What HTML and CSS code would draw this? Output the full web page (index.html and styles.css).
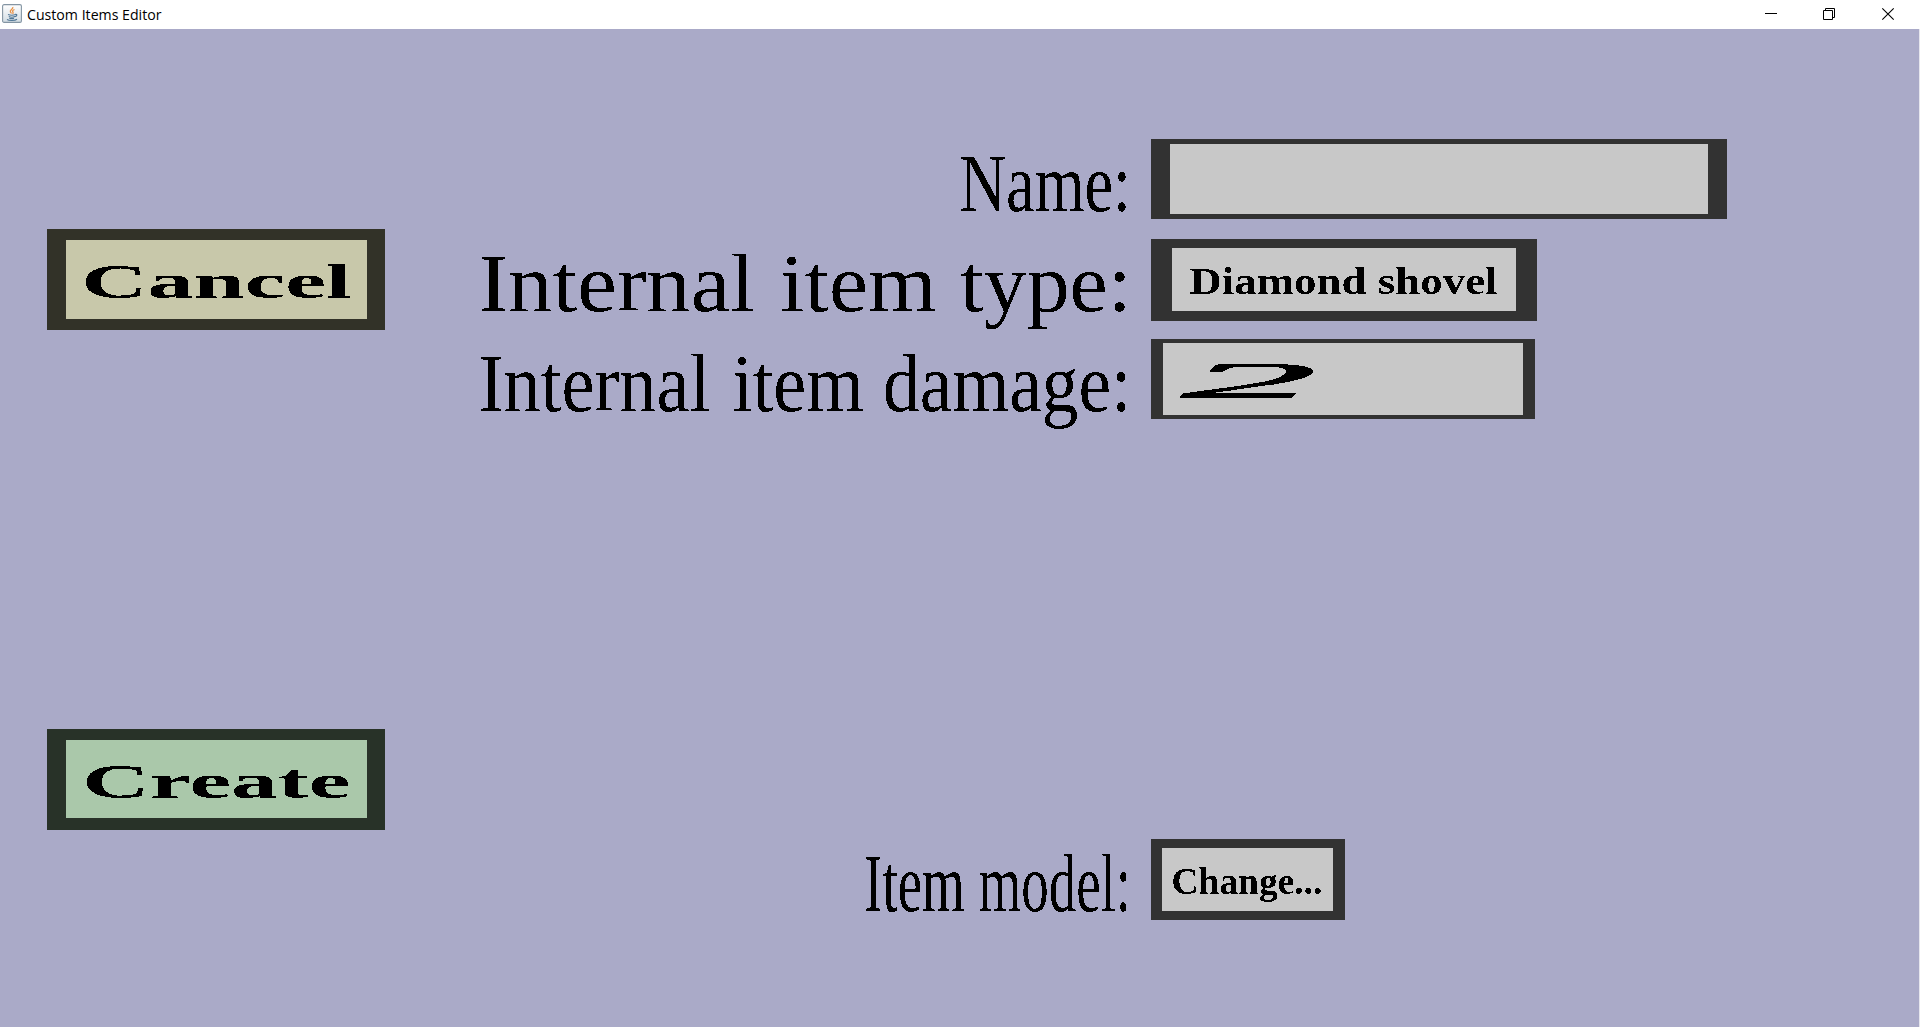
FILE: index.html
```html
<!DOCTYPE html>
<html lang="en">
<head>
<meta charset="utf-8">
<title>Custom Items Editor</title>
<link rel="stylesheet" href="styles.css">
</head>
<body>
<svg class="defs" width="0" height="0" aria-hidden="true">
  <filter id="crisp" x="-5%" y="-20%" width="110%" height="140%" color-interpolation-filters="sRGB">
    <feComponentTransfer><feFuncA type="discrete" tableValues="0 1"/></feComponentTransfer>
  </filter>
</svg>
<header class="titlebar">
  <svg class="app-icon" viewBox="0 0 20 20">
    <defs><linearGradient id="tile" x2="0" y2="1"><stop stop-color="#fff"/><stop offset="1" stop-color="#d3dde4"/></linearGradient></defs>
    <rect x=".6" y=".6" width="18.8" height="17.8" rx="1.5" fill="url(#tile)" stroke="#8495a3" stroke-width="1.1"/>
    <path d="M10.8 3c.8 2-3.6 3-2.4 5 .4.7 1 1 1 1.600M12.500 5.500c-2 .8-2.400 1.500-1.500 2.700.4.700 0 1.200-.5 1.600" fill="none" stroke="#e99145" stroke-width="1.300"/>
    <path d="M6 10.500c2 .8 5.500.8 7.500 0M13.300 10.400c2.400-.4 1.800 1.900-.6 2.200M6.800 12.500c1.500.7 4.500.7 6 0M7.300 14.200c1.300.5 3.500.5 4.700 0M5 15.500c2 1.300 8 1.300 10-.2" fill="none" stroke="#527897" stroke-width="1.100"/>
  </svg>
  <svg class="title" width="160" height="29"><text x="1" y="20" textLength="134.500" lengthAdjust="spacingAndGlyphs">Custom Items Editor</text></svg>
  <div class="controls">
    <svg class="minimize" width="12" height="12"><path d="M0 5.500h12"/></svg>
    <svg width="12" height="12"><path d="M.5 2.500h9v9h-9zM2.500 2.500v-2h9v9h-2"/></svg>
    <svg class="close" width="12" height="12"><path d="M.3.300l11.400 11.400M11.700.300l-11.400 11.400"/></svg>
  </div>
</header>
<main class="editor">
  <nav class="actions">
    <button class="button cancel"><svg><text x="15.300" y="57.700" textLength="270.200" lengthAdjust="spacingAndGlyphs">Cancel</text></svg></button>
    <button class="button create"><svg><text x="16.200" y="57.700" textLength="268" lengthAdjust="spacingAndGlyphs">Create</text></svg></button>
  </nav>
  <section class="form">
    <div class="row">
      <svg class="label"><text x="479.500" y="72" textLength="171.500" lengthAdjust="spacingAndGlyphs">Name:</text></svg>
      <div class="field name"></div>
    </div>
    <div class="row">
      <svg class="label"><text y="72"><tspan x="-1.500" textLength="276.500" lengthAdjust="spacingAndGlyphs">Internal</tspan> <tspan x="300" textLength="156.500" lengthAdjust="spacingAndGlyphs">item</tspan> <tspan x="480" textLength="171.500" lengthAdjust="spacingAndGlyphs">type:</tspan></text></svg>
      <button class="field type"><svg><text x="17.300" y="45.600" textLength="308.300" lengthAdjust="spacingAndGlyphs">Diamond shovel</text></svg></button>
    </div>
    <div class="row">
      <svg class="label"><text y="72"><tspan x="-1.200" textLength="231.500" lengthAdjust="spacingAndGlyphs">Internal</tspan> <tspan x="252.200" textLength="131.600" lengthAdjust="spacingAndGlyphs">item</tspan> <tspan x="403" textLength="248.500" lengthAdjust="spacingAndGlyphs">damage:</tspan></text></svg>
      <div class="field damage"><svg><text x="18.200" y="54.400" textLength="136" lengthAdjust="spacingAndGlyphs">2</text></svg></div>
    </div>
    <div class="row model-row">
      <svg class="label"><text x="384.100" y="72" textLength="267" lengthAdjust="spacingAndGlyphs">Item model:</text></svg>
      <button class="field model"><svg><text x="9.600" y="45.600" textLength="150.700" lengthAdjust="spacingAndGlyphs">Change...</text></svg></button>
    </div>
  </section>
</main>
</body>
</html>
```
FILE: styles.css
```css
* { box-sizing: border-box; }
body {
  margin: 0;
  height: 1027px;
  overflow: hidden;
  display: flex;
  flex-direction: column;
  background: #aaaac8;
  font-family: "Liberation Serif", serif;
}
.defs { position: absolute; }
svg { display: block; flex: none; overflow: visible; }
button { font: inherit; text-align: left; }

.titlebar {
  height: 29px;
  flex: none;
  display: flex;
  align-items: flex-start;
  padding: 0 26px 0 2px;
  background: #fff;
}
.app-icon { width: 20px; height: 20px; margin-top: 4px; }
.title { margin-left: 4px; font: 14.5px "Open Sans", sans-serif; }
.controls { display: flex; gap: 47px; margin: 8px 0 0 auto; }
.controls path { fill: none; stroke: #000; stroke-width: 1; }
.minimize { margin-right: -1px; }
.close path { stroke-width: 1.1; }

.editor {
  flex: 1;
  display: flex;
  align-items: flex-start;
  padding-left: 47px;
  border-right: 1px solid #e6e6ee;
}
.actions {
  width: 433px;
  padding-top: 200px;
  display: flex;
  flex-direction: column;
  gap: 399px;
}
.button {
  width: 338px;
  height: 101px;
  padding: 0;
  border: solid;
  border-width: 11px 18px 11px 19px;
  border-radius: 0;
}
.cancel { background: #c8c8aa; border-color: #323228; }
.create { background: #aac8aa; border-color: #283228; border-bottom-width: 12px; }
.button svg, .field svg { width: 100%; height: 100%; }
text { fill: #000; }
.button text, .label text, .field text { filter: url(#crisp); }
.button text { font-size: 47.500px; font-weight: bold; }

.form { padding-top: 110px; }
.row { display: flex; align-items: flex-start; height: 100px; }
.model-row { margin-top: 400px; }
.label { width: 671px; height: 100px; }
.label text { font-size: 82.500px; }
.field {
  padding: 0;
  border: solid #323232;
  border-radius: 0;
  background: #c8c8c8;
}
.field text { font-size: 38.500px; font-weight: bold; }
.name { width: 576px; height: 80px; border-width: 5px 19px; }
.type { width: 386px; height: 82px; border-width: 9px 21px 10px; }
.damage { width: 384px; height: 80px; border-width: 4px 12px; }
.damage text {
  font-size: 50.500px;
  font-weight: normal;
  font-style: italic;
  stroke: #000;
  stroke-width: .8px;
}
.model { width: 194px; height: 81px; border-width: 9px 12px 9px 11px; }
```
